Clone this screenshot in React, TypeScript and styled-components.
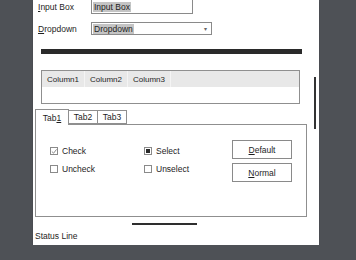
import styled, { createGlobalStyle } from "styled-components";

const GlobalStyle = createGlobalStyle`
  html, body {
    margin: 0;
    padding: 0;
    background: #4e5156;
    overflow: hidden;
  }
  body {
    font-family: "Liberation Sans", Arial, sans-serif;
    font-size: 8.5px;
    color: #1e1e1e;
  }
`;

const App: React.FC = () => {
  return (
    <>
      <GlobalStyle />
      <Window>
        <Form>
          <Label>
            <u>I</u>nput Box
          </Label>
          <InputBox>
            <Selected>Input Box</Selected>
          </InputBox>
          <Label>
            <u>D</u>ropdown
          </Label>
          <Dropdown>
            <Selected>Dropdown</Selected>
            <Arrow>▾</Arrow>
          </Dropdown>
        </Form>

        <ProgressBar />

        <Table>
          <HeaderRow>
            <HeaderCell>Column1</HeaderCell>
            <HeaderCell>Column2</HeaderCell>
            <HeaderCell>Column3</HeaderCell>
          </HeaderRow>
        </Table>

        <TabBar>
          <Tab $active>
            Tab<u>1</u>
          </Tab>
          <Tab>Tab2</Tab>
          <Tab>Tab3</Tab>
        </TabBar>
        <TabPanel>
          <ChoiceGrid>
            <Choice>
              <CheckBox>
                <svg width="7" height="7" viewBox="0 0 7 7">
                  <path d="M1 3.5 L3 5.5 L6.5 1" fill="none" stroke="#777" strokeWidth="1" />
                </svg>
              </CheckBox>
              Check
            </Choice>
            <Choice>
              <CheckBox>
                <RadioDot />
              </CheckBox>
              Select
            </Choice>
            <Choice>
              <CheckBox />
              Uncheck
            </Choice>
            <Choice>
              <CheckBox />
              Unselect
            </Choice>
          </ChoiceGrid>
          <Buttons>
            <Button>
              <u>D</u>efault
            </Button>
            <Button>
              <u>N</u>ormal
            </Button>
          </Buttons>
        </TabPanel>

        <Separator />
        <StatusLine>Status Line</StatusLine>

        <ScrollThumb />
      </Window>
    </>
  );
};

export default App;

const Window = styled.div`
  position: relative;
  margin-left: 33px;
  width: 286px;
  height: 245px;
  background: #ffffff;
  box-shadow: 0 1px 0 #1c1c1c, 0 2px 1px rgba(0, 0, 0, 0.3);
  overflow: hidden;
`;

const Form = styled.div`
  display: grid;
  grid-template-columns: 58px auto;
  grid-template-rows: 15px 13px;
  row-gap: 8px;
  align-items: center;
  margin-top: -1px;
`;

const Label = styled.span`
  padding-left: 5px;
  line-height: 10px;
  u {
    text-decoration-thickness: 1px;
  }
`;

const InputBox = styled.div`
  box-sizing: border-box;
  width: 102px;
  height: 15px;
  border: 1px solid #8a8a8a;
  padding: 1px 1px;
  display: flex;
  align-items: center;
`;

const Dropdown = styled.div`
  box-sizing: border-box;
  width: 121px;
  height: 13px;
  border: 1px solid #8a8a8a;
  padding: 0 1px;
  display: flex;
  align-items: center;
  justify-content: space-between;
`;

const Selected = styled.span`
  background: #c4c4c4;
  padding: 0 1px;
  line-height: 10px;
`;

const Arrow = styled.span`
  font-size: 6px;
  color: #666;
  margin-right: 3px;
`;

const ProgressBar = styled.div`
  margin: 14px 0 0 8px;
  width: 261px;
  height: 5px;
  background: #2a2a2a;
`;

const Table = styled.div`
  box-sizing: border-box;
  margin: 16px 0 0 8px;
  width: 259px;
  height: 34px;
  border: 1px solid #8f8f8f;
`;

const HeaderRow = styled.div`
  display: flex;
  height: 16px;
  background: #e8e8e8;
`;

const HeaderCell = styled.div`
  width: 42px;
  font-size: 8px;
  display: flex;
  align-items: center;
  justify-content: center;
  border-right: 1px solid #f4f4f4;
`;

const TabBar = styled.div`
  display: flex;
  align-items: flex-end;
  margin: 5px 0 0 2px;
  height: 15px;
`;

const Tab = styled.div<{ $active?: boolean }>`
  box-sizing: border-box;
  height: ${(p) => (p.$active ? "16px" : "14px")};
  width: ${(p) => (p.$active ? "34px" : "30px")};
  border: 1px solid #8f8f8f;
  border-bottom: ${(p) => (p.$active ? "none" : "1px solid #8f8f8f")};
  margin-left: ${(p) => (p.$active ? "0" : "-1px")};
  margin-bottom: ${(p) => (p.$active ? "-1px" : "0")};
  background: #ffffff;
  position: relative;
  z-index: ${(p) => (p.$active ? 2 : 1)};
  display: flex;
  align-items: center;
  justify-content: center;
`;

const TabPanel = styled.div`
  box-sizing: border-box;
  margin-left: 2px;
  width: 272px;
  height: 93px;
  border: 1px solid #8f8f8f;
  display: flex;
  padding: 15px 0 0 14px;
`;

const ChoiceGrid = styled.div`
  display: grid;
  grid-template-columns: 94px 88px;
  grid-auto-rows: 18px;
  padding-top: 2px;
`;

const Choice = styled.div`
  display: flex;
  align-items: center;
  gap: 4px;
`;

const CheckBox = styled.span`
  box-sizing: border-box;
  width: 8px;
  height: 8px;
  border: 1px solid #8a8a8a;
  display: flex;
  align-items: center;
  justify-content: center;
`;

const RadioDot = styled.span`
  width: 4px;
  height: 4px;
  background: #2a2a2a;
`;

const Buttons = styled.div`
  display: flex;
  flex-direction: column;
  gap: 4px;
`;

const Button = styled.div`
  box-sizing: border-box;
  width: 60px;
  height: 19px;
  border: 1px solid #8a8a8a;
  display: flex;
  align-items: center;
  justify-content: center;
`;

const Separator = styled.div`
  margin: 6px 0 0 99px;
  width: 65px;
  height: 2px;
  background: #2e2e2e;
`;

const StatusLine = styled.div`
  margin: 6px 0 0 2px;
  line-height: 10px;
`;

const ScrollThumb = styled.div`
  position: absolute;
  left: 281px;
  top: 77px;
  width: 2px;
  height: 52px;
  background: #333;
`;
